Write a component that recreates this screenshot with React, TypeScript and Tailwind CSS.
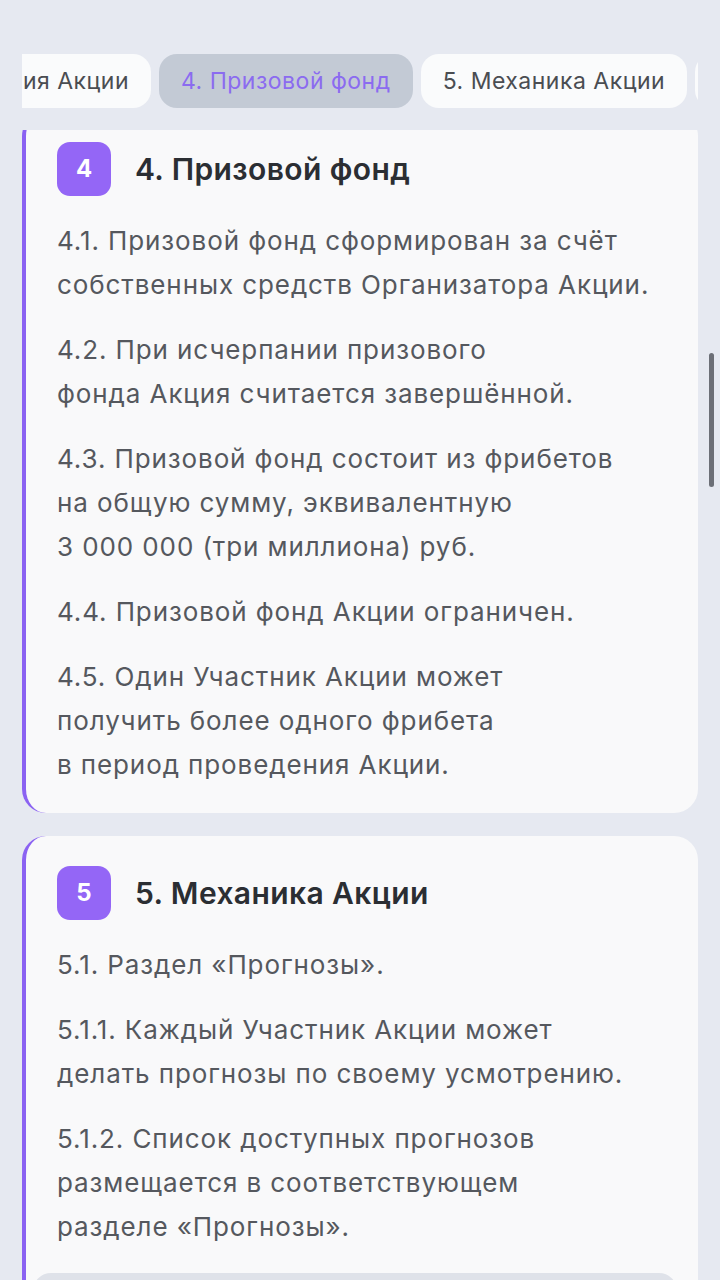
import React from "react";

const P = ({ children }: { children: React.ReactNode }) => (
  <p className="text-[26px] leading-[44px] tracking-[0.9px] text-[#55585e]">{children}</p>
);

const Tab = ({ children, active }: { children: React.ReactNode; active?: boolean }) => (
  <div
    className={
      active
        ? "flex h-full shrink-0 items-center rounded-[18px] bg-[#c3cad5] px-[22px]"
        : "flex h-full shrink-0 items-center rounded-[18px] bg-[#fafbfc] px-[22px]"
    }
  >
    <span
      className={
        active
          ? "whitespace-nowrap text-[23px] tracking-[0.5px] text-[#8b6bf0]"
          : "whitespace-nowrap text-[23px] tracking-[0.5px] text-[#4a4d52]"
      }
    >
      {children}
    </span>
  </div>
);

export default function App() {
  return (
    <div
      className="relative h-[1280px] w-[720px] overflow-hidden bg-[#e6e9f1] px-[22px] pt-[54px]"
      style={{ fontFamily: "Inter, 'Noto Sans', sans-serif" }}
    >
      {/* Tabs */}
      <div className="flex h-[54px] gap-[8px] overflow-hidden">
        <div className="flex h-full w-[129px] shrink-0 items-center justify-end overflow-hidden rounded-r-[18px] bg-[#fafbfc] pr-[22px]">
          <span className="whitespace-nowrap text-[23px] tracking-[0.5px] text-[#4a4d52]">3. Сроки проведения Акции</span>
        </div>
        <Tab active>4. Призовой фонд</Tab>
        <Tab>5. Механика Акции</Tab>
        <Tab>6. Прогнозы</Tab>
      </div>

      {/* Content viewport */}
      <div className="mt-[22px] h-[1160px] overflow-hidden">
        <div className="-mt-[18px] flex flex-col gap-[23px]">
          {/* Card 4 */}
          <div className="rounded-[24px] border-l-[4px] border-[#8b62f2] bg-[#f9f9fa] pb-[26px] pl-[31px] pr-[28px] pt-[30px]">
            <div className="flex items-center gap-[24px]">
              <div className="flex h-[54px] w-[54px] shrink-0 items-center justify-center rounded-[13px] bg-[#9466f6] text-[24px] font-bold text-white">
                4
              </div>
              <h2 className="text-[30px] font-semibold tracking-[0.4px] text-[#2b2e33]">4. Призовой фонд</h2>
            </div>
            <div className="mt-[23px] flex flex-col gap-[21px]">
              <P>
                4.1. Призовой фонд сформирован за счёт
                <br />
                собственных средств Организатора Акции.
              </P>
              <P>
                4.2. При исчерпании призового
                <br />
                фонда Акция считается завершённой.
              </P>
              <P>
                4.3. Призовой фонд состоит из фрибетов
                <br />
                на общую сумму, эквивалентную
                <br />3 000 000 (три миллиона) руб.
              </P>
              <P>4.4. Призовой фонд Акции ограничен.</P>
              <P>
                4.5. Один Участник Акции может
                <br />
                получить более одного фрибета
                <br />в период проведения Акции.
              </P>
            </div>
          </div>

          {/* Card 5 */}
          <div className="rounded-[24px] border-l-[4px] border-[#8b62f2] bg-[#f9f9fa] pb-[28px] pl-[31px] pr-[28px] pt-[30px]">
            <div className="flex items-center gap-[24px]">
              <div className="flex h-[54px] w-[54px] shrink-0 items-center justify-center rounded-[13px] bg-[#9466f6] text-[24px] font-bold text-white">
                5
              </div>
              <h2 className="text-[30px] font-semibold tracking-[0.4px] text-[#2b2e33]">5. Механика Акции</h2>
            </div>
            <div className="mt-[23px] flex flex-col gap-[21px]">
              <P>5.1. Раздел «Прогнозы».</P>
              <P>
                5.1.1. Каждый Участник Акции может
                <br />
                делать прогнозы по своему усмотрению.
              </P>
              <P>
                5.1.2. Список доступных прогнозов
                <br />
                размещается в соответствующем
                <br />
                разделе «Прогнозы».
              </P>
            </div>
            <div className="-ml-[24px] -mr-[7px] mt-[24px] h-[120px] rounded-[18px] bg-[#dfe2e9]" />
          </div>
        </div>
      </div>

      {/* Overlay scrollbar */}
      <div className="absolute left-[709px] top-[353px] h-[134px] w-[5px] rounded-full bg-[#6c6f77]" />
    </div>
  );
}
